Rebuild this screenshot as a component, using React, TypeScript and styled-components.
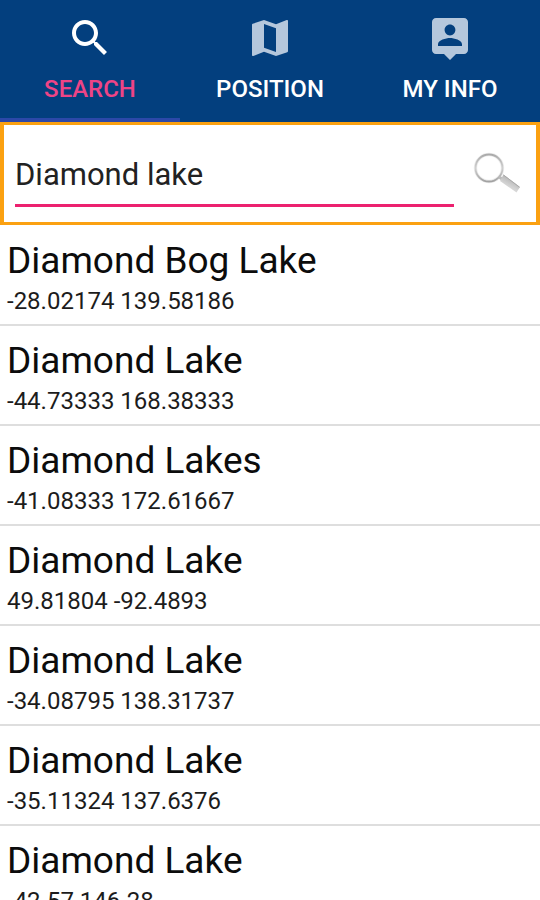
import React, { useState } from "react";
import styled, { createGlobalStyle } from "styled-components";

const GlobalStyle = createGlobalStyle`
  * { box-sizing: border-box; }
  body { margin: 0; background: #fff; color: #111; font-family: Roboto, sans-serif; }
`;

const Screen = styled.div`
  display: flex;
  flex-direction: column;
  height: 100vh;
  overflow: hidden;
`;

const TabBar = styled.nav`
  display: grid;
  grid-template-columns: repeat(3, 1fr);
  flex-shrink: 0;
  background: #033f7e;
`;

const Tab = styled.button<{ $active: boolean }>`
  display: flex;
  flex-direction: column;
  align-items: center;
  gap: 13px;
  padding: 14px 0 15px;
  border: 0;
  border-bottom: 4px solid ${(p) => (p.$active ? "#2c48a8" : "#033f7e")};
  background: none;
  color: ${(p) => (p.$active ? "#ee4486" : "#fff")};
  font: 500 24px/28px Roboto, sans-serif;
  cursor: pointer;
`;

const TabIcon = styled.svg<{ $active: boolean }>`
  width: 48px;
  height: 48px;
  fill: ${(p) => (p.$active ? "#fff" : "#b5c7dc")};
`;

const SearchForm = styled.form`
  display: flex;
  align-items: center;
  flex-shrink: 0;
  gap: 18px;
  padding: 22px 14px 15px 11px;
  border: 4px solid #fba111;
  border-top-width: 3px;
  border-bottom-width: 3px;
`;

const SearchInput = styled.input`
  flex: 1;
  min-width: 0;
  padding: 8px 0 9px;
  border: 0;
  border-bottom: 3px solid #ec216f;
  border-radius: 0;
  outline: 0;
  background: none;
  color: #222;
  font: 400 31px/40px Roboto, sans-serif;
`;

const SearchButton = styled.button`
  display: flex;
  padding: 0 0 8px;
  border: 0;
  background: none;
  cursor: pointer;
`;

const Results = styled.ul`
  flex: 1;
  min-height: 0;
  margin: 0;
  padding: 1px 0 0;
  overflow-y: auto;
  scrollbar-width: none;
  list-style: none;
`;

const Result = styled.li`
  padding: 13px 7px 7px;
  border-bottom: 2px solid #dedede;
`;

const PlaceName = styled.div`
  margin-bottom: 2px;
  color: #0c0c0c;
  font-size: 37px;
  line-height: 44px;
`;

const Coordinates = styled.div`
  color: #1c1c1c;
  font-size: 24px;
  line-height: 32px;
`;

const tabs = [
  {
    label: "SEARCH",
    path: "M15.5 14h-.79l-.28-.27C15.41 12.59 16 11.11 16 9.5 16 5.91 13.09 3 9.5 3S3 5.91 3 9.5 5.91 16 9.5 16c1.61 0 3.09-.59 4.23-1.57l.27.28v.79l5 4.99L20.49 19l-4.99-5zm-6 0C7.01 14 5 11.99 5 9.5S7.01 5 9.5 5 14 7.01 14 9.5 11.99 14 9.5 14z",
  },
  {
    label: "POSITION",
    path: "M20.5 3l-.16.03L15 5.1 9 3 3.36 4.9c-.21.07-.36.25-.36.48V20.5c0 .28.22.5.5.5l.16-.03L9 18.9l6 2.1 5.64-1.9c.21-.07.36-.25.36-.48V3.5c0-.28-.22-.5-.5-.5zM15 19l-6-2.11V5l6 2.11V19z",
  },
  {
    label: "MY INFO",
    path: "M19 2H5c-1.11 0-2 .9-2 2v14c0 1.1.89 2 2 2h4l3 3 3-3h4c1.1 0 2-.9 2-2V4c0-1.1-.9-2-2-2zm-7 3.3c1.49 0 2.7 1.21 2.7 2.7s-1.21 2.7-2.7 2.7S9.3 9.49 9.3 8s1.21-2.7 2.7-2.7zM18 16H6v-.9c0-2 4-3.1 6-3.1s6 1.1 6 3.1v.9z",
  },
];

const places = [
  { name: "Diamond Bog Lake", coords: "-28.02174 139.58186" },
  { name: "Diamond Lake", coords: "-44.73333 168.38333" },
  { name: "Diamond Lakes", coords: "-41.08333 172.61667" },
  { name: "Diamond Lake", coords: "49.81804 -92.4893" },
  { name: "Diamond Lake", coords: "-34.08795 138.31737" },
  { name: "Diamond Lake", coords: "-35.11324 137.6376" },
  { name: "Diamond Lake", coords: "-42.57 146.28" },
];

function Magnifier() {
  return (
    <svg width="50" height="42" viewBox="0 0 50 42" aria-hidden="true">
      <defs>
        <linearGradient id="rim" x1="0" y1="0" x2="0" y2="1">
          <stop offset="0" stopColor="#aaa" />
          <stop offset="0.5" stopColor="#cfcfcf" />
          <stop offset="1" stopColor="#a2a2a2" />
        </linearGradient>
        <linearGradient id="handle" x1="0" y1="1" x2="0.6" y2="0">
          <stop offset="0" stopColor="#ededed" />
          <stop offset="0.5" stopColor="#d2d2d2" />
          <stop offset="1" stopColor="#a6a6a6" />
        </linearGradient>
      </defs>
      <circle cx="17" cy="16" r="13.5" fill="none" stroke="#ededed" strokeWidth="3.4" />
      <circle cx="17" cy="16" r="13.5" fill="none" stroke="url(#rim)" strokeWidth="1.8" />
      <path d="M27 25l3 2" stroke="#bbb" strokeWidth="3" />
      <path d="M31.5 22.5L48 35L44.5 40.5L28 29Z" fill="url(#handle)" />
      <path d="M31.5 23L47.5 35.2" stroke="#a9a9a9" strokeWidth="1" />
    </svg>
  );
}

export default function App() {
  const [active, setActive] = useState("SEARCH");
  const [query, setQuery] = useState("Diamond lake");
  return (
    <Screen>
      <GlobalStyle />
      <TabBar>
        {tabs.map(({ label, path }) => (
          <Tab
            key={label}
            type="button"
            $active={label === active}
            aria-current={label === active ? "page" : undefined}
            onClick={() => setActive(label)}
          >
            <TabIcon $active={label === active} viewBox="0 0 24 24" aria-hidden="true">
              <path d={path} />
            </TabIcon>
            {label}
          </Tab>
        ))}
      </TabBar>
      <SearchForm onSubmit={(e: React.FormEvent) => e.preventDefault()}>
        <SearchInput
          type="text"
          aria-label="Place name"
          value={query}
          onChange={(e) => setQuery(e.target.value)}
        />
        <SearchButton type="submit" aria-label="Search">
          <Magnifier />
        </SearchButton>
      </SearchForm>
      <Results>
        {places.map(({ name, coords }) => (
          <Result key={coords}>
            <PlaceName>{name}</PlaceName>
            <Coordinates>{coords}</Coordinates>
          </Result>
        ))}
      </Results>
    </Screen>
  );
}
